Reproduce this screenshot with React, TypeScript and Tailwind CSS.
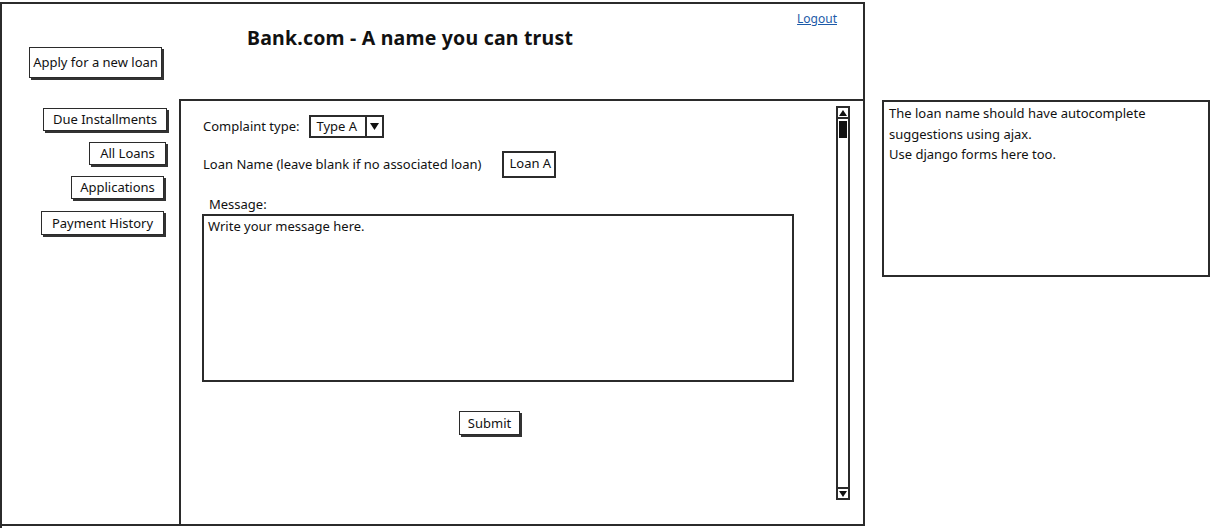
import React from 'react';

const font = { fontFamily: '"Noto Sans", "DejaVu Sans", sans-serif' };

function SketchButton({ label, className = '' }: { label: string; className?: string }) {
  return (
    <div
      className={`bg-white border border-[#2b2b2b] shadow-[2px_2px_0_#333] text-[13px] leading-none text-[#111] flex items-center justify-center ${className}`}
    >
      {label}
    </div>
  );
}

function Scrollbar() {
  return (
    <div className="w-[14px] h-[394px] border-2 border-[#2b2b2b] flex flex-col items-center justify-between">
      <div className="flex flex-col items-center w-full">
        <div className="w-full h-[11px] border-b-2 border-[#2b2b2b] flex items-center justify-center">
          <svg width="8" height="6" viewBox="0 0 8 6">
            <path d="M4 0 L8 6 L0 6 Z" fill="#111" />
          </svg>
        </div>
        <div className="w-[8px] h-[17px] bg-[#111] mt-[2px]" />
      </div>
      <div className="w-full h-[11px] border-t-2 border-[#2b2b2b] flex items-center justify-center">
        <svg width="8" height="6" viewBox="0 0 8 6">
          <path d="M0 0 L8 0 L4 6 Z" fill="#111" />
        </svg>
      </div>
    </div>
  );
}

export default function App() {
  return (
    <div className="w-[1211px] h-[528px] bg-white flex text-[#111]" style={font}>
      {/* main wireframe window */}
      <div className="w-[865px] h-[526px] mt-[2px] border-l-2 border-t-2 border-[#2b2b2b] flex flex-col">
        <header className="h-[95px] border-r-2 border-[#2b2b2b] flex flex-col">
          <div className="flex justify-end pr-[26px] pt-[9px] h-[22px]">
            <a href="#" className="text-[12px] leading-none text-[#1c5aa8] underline">
              Logout
            </a>
          </div>
          <div className="flex">
            <div className="w-[245px] pl-[27px] pt-[21px]">
              <SketchButton label="Apply for a new loan" className="w-[133px] h-[31px]" />
            </div>
            <h1 className="text-[19.5px] font-bold leading-none mt-[2px] tracking-[0.2px]">
              Bank.com - A name you can trust
            </h1>
          </div>
        </header>

        <div className="flex h-[427px]">
          <aside className="w-[177px] border-b-2 border-[#2b2b2b] flex flex-col items-end pt-[9px] pr-[12px]">
            <SketchButton label="Due Installments" className="w-[124px] h-[23px]" />
            <SketchButton label="All Loans" className="w-[77px] h-[23px] mt-[11px] mr-[1px]" />
            <SketchButton label="Applications" className="w-[93px] h-[23px] mt-[11px] mr-[3px]" />
            <SketchButton label="Payment History" className="w-[123px] h-[24px] mt-[12px] mr-[3px]" />
          </aside>

          <main className="w-[686px] border-2 border-[#2b2b2b] flex">
            <div className="flex-1 pl-[21px] pt-[14px] text-[13px]">
              <div className="flex items-center h-[23px] pl-[1px]">
                <span>Complaint type:</span>
                <div className="ml-[10px] w-[75px] h-[23px] border-2 border-[#2b2b2b] flex">
                  <span className="flex-1 pl-[5px] leading-[19px]">Type A</span>
                  <div className="w-[17px] border-l-2 border-[#2b2b2b] flex items-center justify-center">
                    <svg width="9" height="7" viewBox="0 0 9 7">
                      <path d="M0 0 L9 0 L4.5 7 Z" fill="#111" />
                    </svg>
                  </div>
                </div>
              </div>

              <div className="flex items-center h-[27px] mt-[13px] pl-[1px]">
                <span>Loan Name (leave blank if no associated loan)</span>
                <div className="ml-[21px] w-[54px] h-[27px] border-2 border-[#2b2b2b] pl-[5px] leading-[21px]">
                  Loan A
                </div>
              </div>

              <div className="mt-[17px] pl-[7px] leading-[18px]">Message:</div>
              <div className="mt-[1px] w-[592px] h-[168px] border-2 border-[#2b2b2b] px-[4px] pt-[1px] leading-[18px]">
                Write your message here.
              </div>

              <div className="mt-[29px] pl-[257px]">
                <SketchButton label="Submit" className="w-[61px] h-[24px]" />
              </div>
            </div>
            <div className="pt-[5px] pr-[13px]">
              <Scrollbar />
            </div>
          </main>
        </div>
      </div>

      {/* annotation note */}
      <div className="ml-[17px] mt-[100px] w-[328px] h-[177px] border-2 border-[#2b2b2b] px-[5px] pt-[1px] text-[13px] leading-[20.5px]">
        The loan name should have autocomplete
        <br />
        suggestions using ajax.
        <br />
        Use django forms here too.
      </div>
    </div>
  );
}
